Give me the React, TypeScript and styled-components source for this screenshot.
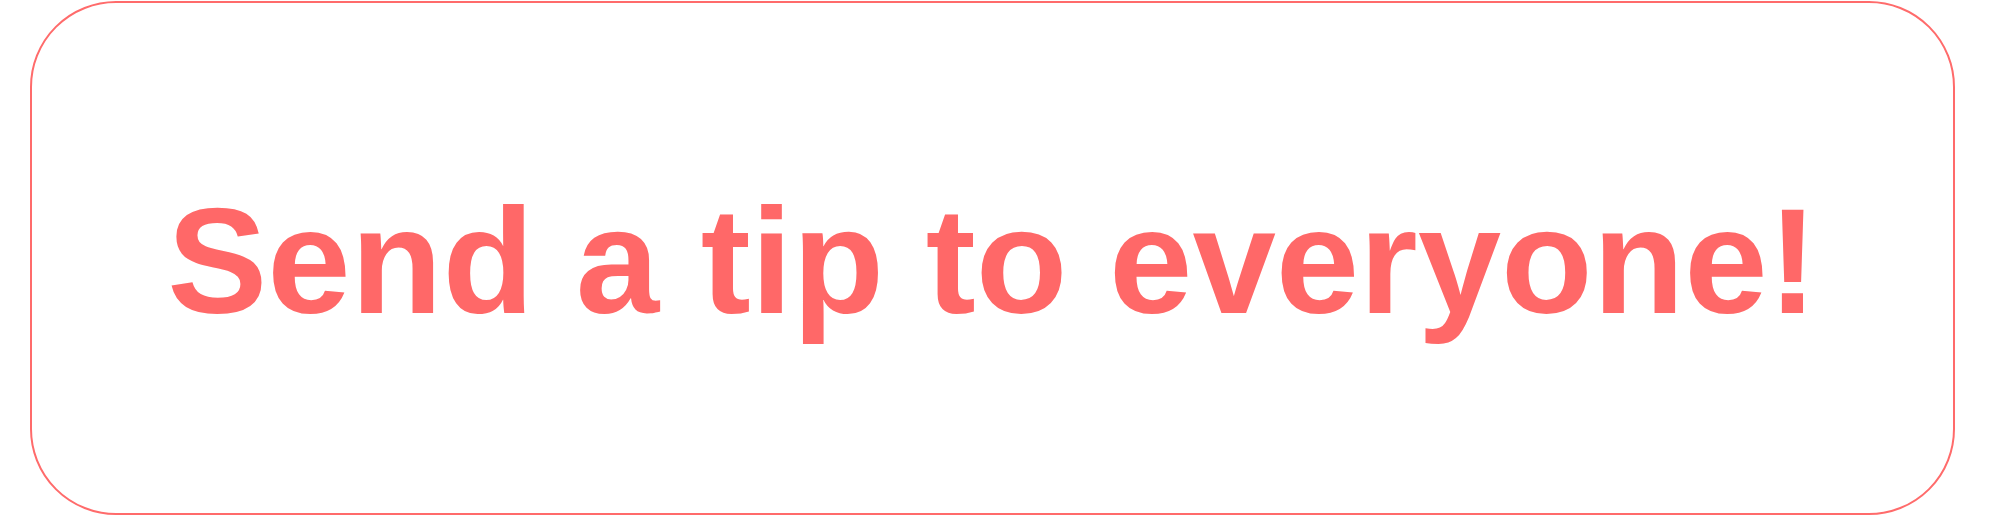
import React from "react";
import styled, { createGlobalStyle } from "styled-components";

const GlobalStyle = createGlobalStyle`
  html, body {
    margin: 0;
    padding: 0;
    background: #ffffff;
  }
  body {
    font-family: "Liberation Sans", Arial, sans-serif;
  }
`;

const Page = styled.div`
  width: 1989px;
  height: 516px;
  box-sizing: border-box;
  padding: 1px 34px 1px 30px;
  display: flex;
`;

const Card = styled.div`
  flex: 1;
  box-sizing: border-box;
  border: 2px solid #ff6b6b;
  border-radius: 86px;
  display: flex;
  align-items: center;
  justify-content: center;
  padding-top: 6px;
`;

const Title = styled.h1`
  margin: 0;
  font-family: "Liberation Sans", Arial, sans-serif;
  font-weight: 700;
  font-size: 150px;
  line-height: 1;
  color: #ff6868;
  white-space: nowrap;
`;

export default function App() {
  return (
    <>
      <GlobalStyle />
      <Page>
        <Card>
          <Title>Send a tip to everyone!</Title>
        </Card>
      </Page>
    </>
  );
}
